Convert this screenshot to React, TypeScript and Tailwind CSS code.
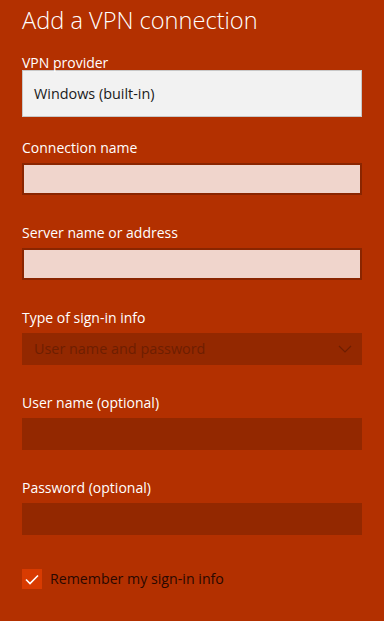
const font = { fontFamily: '"Open Sans", "Noto Sans", sans-serif' };

function Field({ label, children, first }: { label: string; children: React.ReactNode; first?: boolean }) {
  return (
    <div className={first ? "mt-[21px]" : "mt-[28px]"}>
      <div className="text-[14px] leading-[20px] text-white">{label}</div>
      <div className="mt-[5px]">{children}</div>
    </div>
  );
}

function LightInput() {
  return <div className="h-[32px] border-2 border-[#8a2500] bg-[#f0d5cc]" />;
}

function DarkInput() {
  return <div className="h-[32px] bg-[#932800]" />;
}

export default function App() {
  return (
    <div
      className="h-[621px] w-[384px] overflow-hidden bg-[#b33000] px-[22px] pt-[4px]"
      style={font}
    >
      <h1 className="text-[23.6px] font-light leading-[32px] text-white">Add a VPN connection</h1>

      <div className="mt-[20px]">
        <div className="text-[14px] leading-[14px] text-white">VPN provider</div>
        <div className="flex h-[47px] items-center border border-[#c8c8c8] bg-[#f2f2f2] px-[11px] text-[14.4px] text-[#1a1a1a]">
          Windows (built-in)
        </div>
      </div>

      <Field label="Connection name" first>
        <LightInput />
      </Field>

      <Field label="Server name or address">
        <LightInput />
      </Field>

      <Field label="Type of sign-in info">
        <div className="flex h-[32px] items-center justify-between bg-[#932800] pl-[12px] pr-[10px] text-[14.4px] text-[#6e1e00]">
          <span>User name and password</span>
          <svg width="14" height="8" viewBox="0 0 14 8" fill="none">
            <polyline points="1,1 7,7 13,1" stroke="#6e1e00" strokeWidth="1.2" />
          </svg>
        </div>
      </Field>

      <Field label="User name (optional)">
        <DarkInput />
      </Field>

      <Field label="Password (optional)">
        <DarkInput />
      </Field>

      <label className="mt-[34px] flex items-center gap-[8px]">
        <span className="flex h-[20px] w-[20px] items-center justify-center bg-[#d83b01]">
          <svg width="14" height="11" viewBox="0 0 14 11" fill="none">
            <polyline points="1,5.5 5,9.5 13,1.5" stroke="white" strokeWidth="1.6" />
          </svg>
        </span>
        <span className="text-[14.2px] leading-[20px] text-[#2a0800]">Remember my sign-in info</span>
      </label>
    </div>
  );
}
